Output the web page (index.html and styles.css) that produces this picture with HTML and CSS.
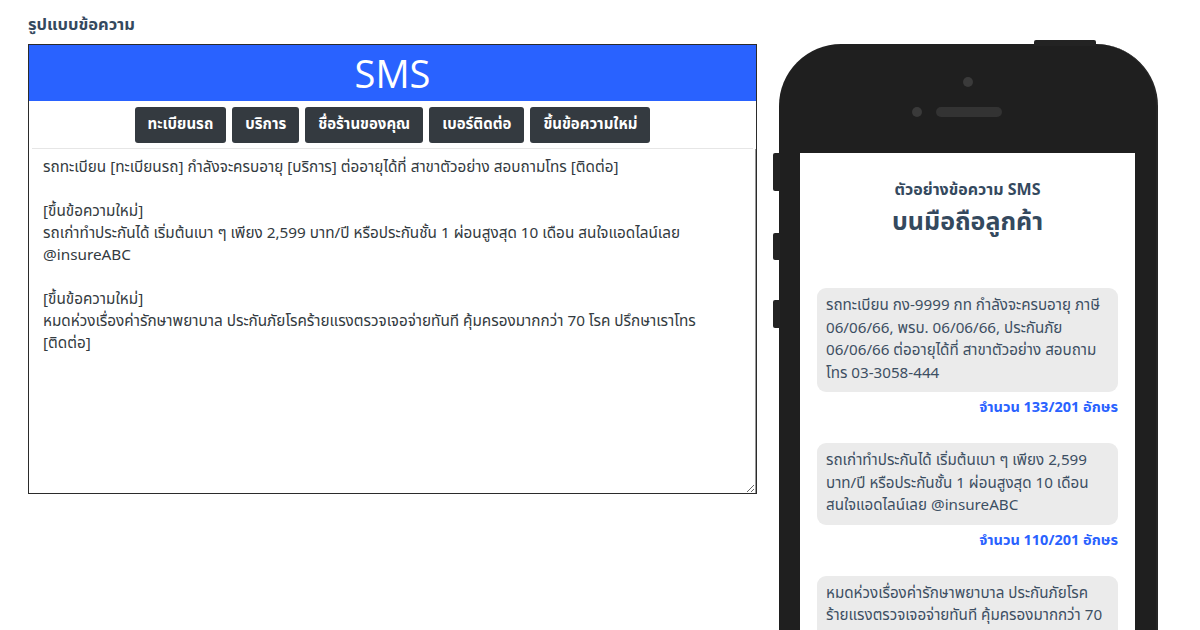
FILE: index.html
```html
<!DOCTYPE html>
<html lang="th">
<head>
<meta charset="utf-8">
<title>SMS</title>
<link rel="stylesheet" href="styles.css">
</head>
<body>
<div class="page">
  <div class="left">
    <div class="label">รูปแบบข้อความ</div>
    <div class="editor">
      <div class="editor-head">SMS</div>
      <div class="toolbar">
        <button class="btn">ทะเบียนรถ</button>
        <button class="btn">บริการ</button>
        <button class="btn">ชื่อร้านของคุณ</button>
        <button class="btn">เบอร์ติดต่อ</button>
        <button class="btn">ขึ้นข้อความใหม่</button>
      </div>
      <textarea class="msg">รถทะเบียน [ทะเบียนรถ] กำลังจะครบอายุ [บริการ] ต่ออายุได้ที่ สาขาตัวอย่าง สอบถามโทร [ติดต่อ]

[ขึ้นข้อความใหม่]
รถเก่าทำประกันได้ เริ่มต้นเบา ๆ เพียง 2,599 บาท/ปี หรือประกันชั้น 1 ผ่อนสูงสุด 10 เดือน สนใจแอดไลน์เลย @insureABC

[ขึ้นข้อความใหม่]
หมดห่วงเรื่องค่ารักษาพยาบาล ประกันภัยโรคร้ายแรงตรวจเจอจ่ายทันที คุ้มครองมากกว่า 70 โรค ปรึกษาเราโทร [ติดต่อ]</textarea>
    </div>
  </div>

  <div class="phone">
    <span class="side-btn top-btn"></span>
    <span class="side-btn s1"></span>
    <span class="side-btn s2"></span>
    <span class="side-btn s3"></span>
    <div class="phone-top">
      <div class="camera"></div>
      <div class="speaker-row">
        <div class="sensor"></div>
        <div class="speaker"></div>
      </div>
    </div>
    <div class="screen">
      <div class="s-title">ตัวอย่างข้อความ SMS</div>
      <div class="s-title2">บนมือถือลูกค้า</div>

      <div class="bubble">รถทะเบียน กง-9999 กท กำลังจะครบอายุ ภาษี<br>06/06/66, พรบ. 06/06/66, ประกันภัย<br>06/06/66 ต่ออายุได้ที่ สาขาตัวอย่าง สอบถาม<br>โทร 03-3058-444</div>
      <div class="count">จำนวน 133/201 อักษร</div>

      <div class="bubble">รถเก่าทำประกันได้ เริ่มต้นเบา ๆ เพียง 2,599<br>บาท/ปี หรือประกันชั้น 1 ผ่อนสูงสุด 10 เดือน<br>สนใจแอดไลน์เลย @insureABC</div>
      <div class="count">จำนวน 110/201 อักษร</div>

      <div class="bubble">หมดห่วงเรื่องค่ารักษาพยาบาล ประกันภัยโรค<br>ร้ายแรงตรวจเจอจ่ายทันที คุ้มครองมากกว่า 70<br>โรค ปรึกษาเราโทร 03-3058-444</div>
      <div class="count">จำนวน 98/201 อักษร</div>
    </div>
  </div>
</div>
</body>
</html>
```

FILE: styles.css
```css
* { box-sizing: border-box; }

html, body {
  margin: 0;
  padding: 0;
  background: #ffffff;
  overflow: hidden;
}

body {
  font-family: "Noto Sans Thai", "Noto Sans Thai UI", "Noto Sans", "Liberation Sans", sans-serif;
  color: #34495e;
  width: 1200px;
  height: 630px;
}

.page {
  display: flex;
  align-items: flex-start;
  gap: 22px;
  padding: 14px 0 0 28px;
}

.left {
  width: 729px;
  display: flex;
  flex-direction: column;
}

.label {
  font-size: 16.5px;
  font-weight: 700;
  line-height: 22px;
  color: #34495e;
  margin-bottom: 8px;
  padding-top: 1px;
  margin-top: -1px;
}

.editor {
  height: 450px;
  border: 1px solid #2b2b2b;
  display: flex;
  flex-direction: column;
}

.editor-head {
  height: 56px;
  background: #2962ff;
  color: #ffffff;
  font-family: "Open Sans", "Noto Sans", sans-serif;
  font-size: 38px;
  font-weight: 400;
  line-height: 56px;
  text-align: center;
}

.toolbar {
  display: flex;
  justify-content: center;
  gap: 6px;
  padding: 6px 0 5px;
  margin: 0 3px;
  border-bottom: 1px solid #e6e6e6;
}

.btn {
  height: 36px;
  padding: 0 13px;
  border: none;
  border-radius: 3px;
  background: #343a40;
  color: #ffffff;
  font-family: inherit;
  font-size: 15px;
  font-weight: 700;
  line-height: 36px;
}

.msg {
  flex: 1;
  width: 100%;
  border: none;
  border-right: 1px solid #9a9a9a;
  resize: both;
  padding: 8px 14px 6px;
  font-family: inherit;
  font-size: 15.3px;
  line-height: 22px;
  color: #333a40;
  background: #ffffff;
  outline: none;
}

.phone {
  position: relative;
  width: 379px;
  height: 720px;
  margin-top: 30px;
  background: #1f1f1f;
  border-radius: 62px;
  border-right: 2px solid #262626;
  padding: 0 21px;
  display: flex;
  flex-direction: column;
}

.side-btn {
  position: absolute;
  background: #232323;
}

.top-btn {
  top: -4px;
  left: 255px;
  width: 62px;
  height: 6px;
  border-radius: 2px 2px 0 0;
}

.s1, .s2, .s3 {
  left: -6px;
  width: 7px;
  border-radius: 2px 0 0 2px;
}
.s1 { top: 109px; height: 38px; }
.s2 { top: 189px; height: 27px; }
.s3 { top: 256px; height: 28px; }

.phone-top {
  height: 109px;
  display: flex;
  flex-direction: column;
  align-items: center;
}

.camera {
  width: 10px;
  height: 10px;
  margin-top: 33px;
  border-radius: 50%;
  background: #3a3a3a;
}

.speaker-row {
  display: flex;
  align-items: center;
  gap: 14px;
  margin-top: 20px;
  margin-left: -22px;
}

.sensor {
  width: 10px;
  height: 10px;
  border-radius: 50%;
  background: #3a3a3a;
}

.speaker {
  width: 66px;
  height: 10px;
  border-radius: 5px;
  background: #333333;
}

.screen {
  flex: 1;
  background: #ffffff;
  padding: 26px 17px 24px;
}

.s-title {
  text-align: center;
  font-size: 16px;
  font-weight: 700;
  line-height: 22px;
  color: #34495e;
}

.s-title2 {
  text-align: center;
  font-size: 25px;
  font-weight: 700;
  line-height: 34px;
  margin-top: 4px;
  margin-bottom: 49px;
  color: #34495e;
}

.bubble {
  background: #ebebeb;
  border-radius: 9px;
  padding: 7px 9px;
  font-size: 15.2px;
  line-height: 22.5px;
  color: #3d4f63;
  white-space: nowrap;
}

.count {
  text-align: right;
  font-size: 14.5px;
  font-weight: 700;
  line-height: 20px;
  color: #2962ff;
  margin-top: 6px;
  margin-bottom: 25px;
}
```
